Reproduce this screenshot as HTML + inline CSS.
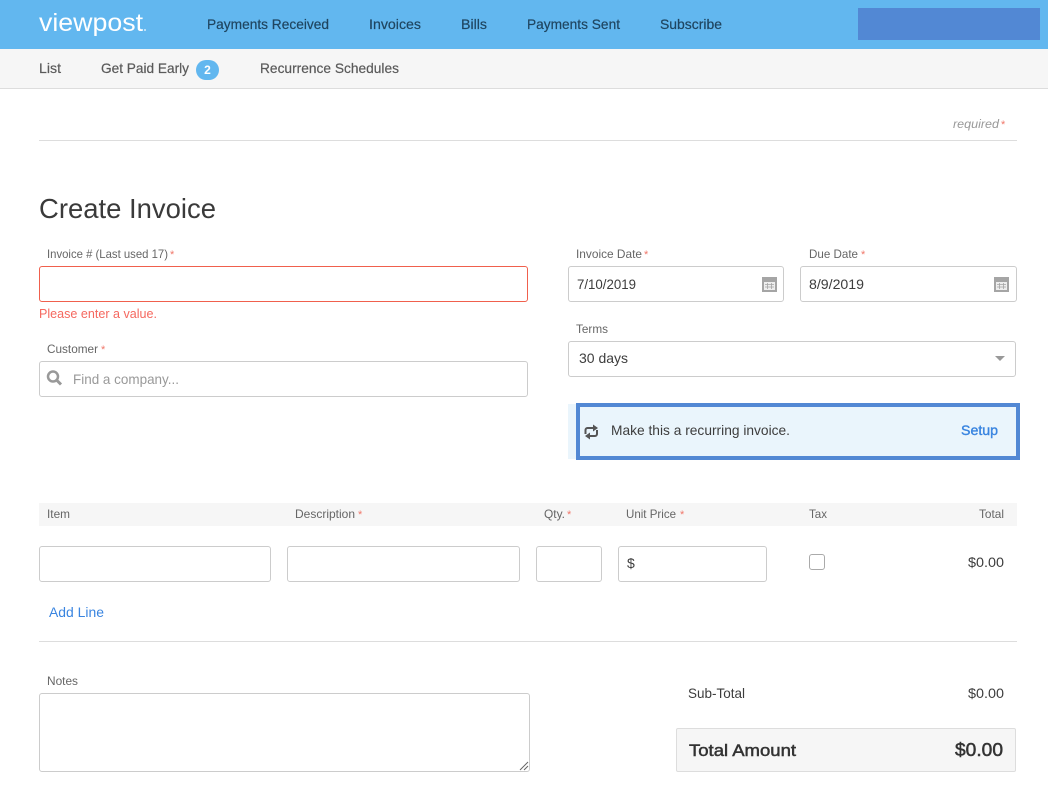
<!DOCTYPE html>
<html lang="en"><head><meta charset="utf-8"><title>Create Invoice</title>
<style>
html,body{margin:0;padding:0;background:#fff;width:1048px;height:803px;overflow:hidden}
body{position:relative;font-family:"Liberation Sans",sans-serif}
.b{position:absolute;box-sizing:border-box}
.i{position:absolute;box-sizing:border-box;background:#fff;border:1px solid #ccc;border-radius:3px}
svg{position:absolute;left:0;top:0}
text{font-family:"Liberation Sans",sans-serif}
.n{font-size:14px;fill:#1f4560;stroke:#1f4560;stroke-width:.2px}
.s{font-size:14px;fill:#5a5a5a;stroke:#5a5a5a;stroke-width:.2px}
.l{font-size:12px;fill:#666}
.r{font-size:11px;fill:#f0776a}
.v{font-size:14px;fill:#3d3d3d}
</style></head><body>
<div class="b" style="left:0;top:0;width:1048px;height:49px;background:#62b7ef"></div>
<div class="b" style="left:858px;top:8px;width:182px;height:32px;background:#5288d4"></div>
<div class="b" style="left:0;top:49px;width:1048px;height:40px;background:#f6f6f6;border-bottom:1px solid #ddd"></div>
<div class="b" style="left:196px;top:60px;width:23px;height:20px;border-radius:10px;background:#62b7ef"></div>
<div class="b" style="left:39px;top:140px;width:978px;height:1px;background:#ddd"></div>
<div class="i" style="left:39px;top:266px;width:489px;height:36px;border-color:#f0604d"></div>
<div class="i" style="left:39px;top:361px;width:489px;height:36px"></div>
<div class="i" style="left:568px;top:266px;width:216px;height:36px"></div>
<div class="i" style="left:800px;top:266px;width:217px;height:36px"></div>
<div class="i" style="left:568px;top:341px;width:448px;height:36px"></div>
<div class="b" style="left:568px;top:404px;width:12px;height:55px;background:#eaf5fc"></div>
<div class="b" style="left:576px;top:403px;width:444px;height:57px;background:#eaf5fc;border:4px solid #5288d4"></div>
<div class="b" style="left:39px;top:503px;width:978px;height:23px;background:#f6f6f6"></div>
<div class="i" style="left:39px;top:546px;width:232px;height:36px"></div>
<div class="i" style="left:287px;top:546px;width:233px;height:36px"></div>
<div class="i" style="left:536px;top:546px;width:66px;height:36px"></div>
<div class="i" style="left:618px;top:546px;width:149px;height:36px"></div>
<div class="i" style="left:809px;top:554px;width:16px;height:16px;border-color:#aaa"></div>
<div class="b" style="left:39px;top:641px;width:978px;height:1px;background:#ddd"></div>
<div class="i" style="left:39px;top:693px;width:491px;height:79px"></div>
<div class="b" style="left:676px;top:728px;width:340px;height:44px;background:#f6f6f6;border:1px solid #ddd;border-radius:2px"></div>
<svg width="1048" height="803" viewBox="0 0 1048 803" xmlns="http://www.w3.org/2000/svg">
<text x="39" y="31" font-size="25" fill="#fff" textLength="104" lengthAdjust="spacingAndGlyphs">viewpost</text>
<circle cx="145" cy="30" r="1" fill="#d5ecfb"/>
<text class="n" x="207" y="29" textLength="122" lengthAdjust="spacingAndGlyphs">Payments Received</text>
<text class="n" x="369" y="29" textLength="52" lengthAdjust="spacingAndGlyphs">Invoices</text>
<text class="n" x="461" y="29" textLength="26" lengthAdjust="spacingAndGlyphs">Bills</text>
<text class="n" x="527" y="29" textLength="93" lengthAdjust="spacingAndGlyphs">Payments Sent</text>
<text class="n" x="660" y="29" textLength="62" lengthAdjust="spacingAndGlyphs">Subscribe</text>
<text class="s" x="39" y="73" textLength="22" lengthAdjust="spacingAndGlyphs">List</text>
<text class="s" x="101" y="73" textLength="88" lengthAdjust="spacingAndGlyphs">Get Paid Early</text>
<text x="207.500" y="74" font-size="12" font-weight="700" fill="#fff" text-anchor="middle">2</text>
<text class="s" x="260" y="73" textLength="139" lengthAdjust="spacingAndGlyphs">Recurrence Schedules</text>
<text x="953" y="128" font-size="12" font-style="italic" fill="#999" textLength="46" lengthAdjust="spacingAndGlyphs">required</text><text class="r" x="1001" y="128">*</text>
<text x="39" y="218" font-size="28" fill="#3a3a3a" textLength="177" lengthAdjust="spacingAndGlyphs">Create Invoice</text>
<text class="l" x="47" y="258" textLength="121" lengthAdjust="spacingAndGlyphs">Invoice # (Last used 17)</text><text class="r" x="170" y="258">*</text>
<text x="39" y="318" font-size="13" fill="#f5685f" textLength="118" lengthAdjust="spacingAndGlyphs">Please enter a value.</text>
<text class="l" x="47" y="353" textLength="51" lengthAdjust="spacingAndGlyphs">Customer</text><text class="r" x="101" y="353">*</text>
<circle cx="53" cy="376.500" r="5" fill="none" stroke="#999" stroke-width="2.500"/><path d="M57 380.500l4 4" stroke="#999" stroke-width="3" fill="none"/>
<text x="73" y="384" font-size="14" fill="#999" textLength="106" lengthAdjust="spacingAndGlyphs">Find a company...</text>
<text class="l" x="576" y="258" textLength="66" lengthAdjust="spacingAndGlyphs">Invoice Date</text><text class="r" x="644" y="258">*</text>
<text class="v" x="577" y="289" textLength="59" lengthAdjust="spacingAndGlyphs">7/10/2019</text>
<rect x="762" y="277" width="15" height="15" fill="#a5a5a5"/><rect x="764" y="282" width="11" height="8" fill="#eee"/><path d="M765 284.500h9M765 287h9M767.500 283v6M771.500 283v6" stroke="#a5a5a5" stroke-width=".8"/>
<text class="l" x="809" y="258" textLength="49" lengthAdjust="spacingAndGlyphs">Due Date</text><text class="r" x="861" y="258">*</text>
<text class="v" x="809" y="289" textLength="55" lengthAdjust="spacingAndGlyphs">8/9/2019</text>
<rect x="994" y="277" width="15" height="15" fill="#a5a5a5"/><rect x="996" y="282" width="11" height="8" fill="#eee"/><path d="M997 284.500h9M997 287h9M999.500 283v6M1003.500 283v6" stroke="#a5a5a5" stroke-width=".8"/>
<text class="l" x="576" y="333" textLength="32" lengthAdjust="spacingAndGlyphs">Terms</text>
<text class="v" x="579" y="363" textLength="49" lengthAdjust="spacingAndGlyphs">30 days</text>
<path d="M995 356h10l-5 5z" fill="#999"/>
<path d="M585.500 434v-4a2 2 0 0 1 2-2H594M597 430v4a2 2 0 0 1-2 2H589" fill="none" stroke="#555" stroke-width="2"/>
<path d="M593 424.500l5 3.500-5 3.500zM590 432.500l-5 3.500 5 3.500z" fill="#555"/>
<text class="v" x="611" y="435" textLength="179" lengthAdjust="spacingAndGlyphs">Make this a recurring invoice.</text>
<text x="961" y="435" font-size="14" fill="#3a85e0" stroke="#3a85e0" stroke-width=".4" textLength="37" lengthAdjust="spacingAndGlyphs">Setup</text>
<text class="l" x="47" y="518" textLength="23" lengthAdjust="spacingAndGlyphs">Item</text>
<text class="l" x="295" y="518" textLength="60" lengthAdjust="spacingAndGlyphs">Description</text><text class="r" x="358" y="518">*</text>
<text class="l" x="544" y="518" textLength="21" lengthAdjust="spacingAndGlyphs">Qty.</text><text class="r" x="567" y="518">*</text>
<text class="l" x="626" y="518" textLength="50" lengthAdjust="spacingAndGlyphs">Unit Price</text><text class="r" x="680" y="518">*</text>
<text class="l" x="809" y="518" textLength="18" lengthAdjust="spacingAndGlyphs">Tax</text>
<text class="l" x="979" y="518" textLength="25" lengthAdjust="spacingAndGlyphs">Total</text>
<text class="v" x="627" y="568">$</text>
<text class="v" x="968" y="567" textLength="36" lengthAdjust="spacingAndGlyphs">$0.00</text>
<text x="49" y="617" font-size="14" fill="#3a85e0" textLength="55" lengthAdjust="spacingAndGlyphs">Add Line</text>
<text class="l" x="47" y="685" textLength="31" lengthAdjust="spacingAndGlyphs">Notes</text>
<path d="M520 770l8-8M524 770l4-4" stroke="#666" stroke-width="1" fill="none"/>
<text class="v" x="688" y="698" textLength="57" lengthAdjust="spacingAndGlyphs">Sub-Total</text>
<text class="v" x="968" y="698" textLength="36" lengthAdjust="spacingAndGlyphs">$0.00</text>
<text x="689" y="756" font-size="17" fill="#333" stroke="#333" stroke-width=".5" textLength="107" lengthAdjust="spacingAndGlyphs">Total Amount</text>
<text x="955" y="756" font-size="18" fill="#333" stroke="#333" stroke-width=".5" textLength="48" lengthAdjust="spacingAndGlyphs">$0.00</text>
</svg>
</body></html>
